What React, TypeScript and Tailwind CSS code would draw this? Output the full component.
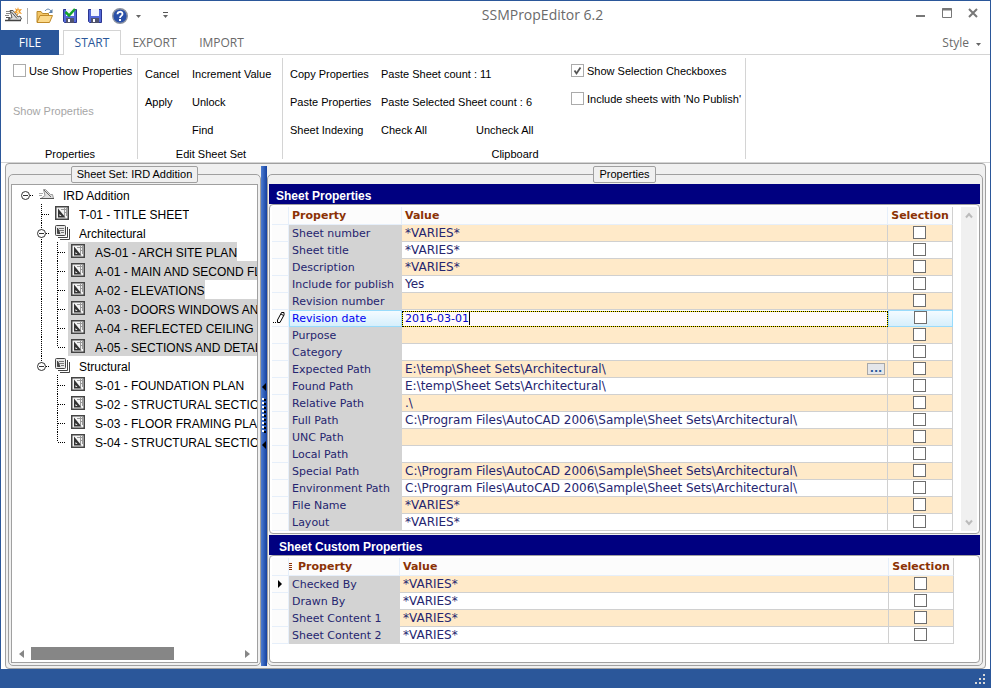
import React, { useState } from "react";

const SANS = "font-['Liberation_Sans',Arial,sans-serif]";
const SEGOE = "font-['Open_Sans','Noto_Sans',sans-serif]";
const VERDANA = "font-['DejaVu_Sans',Verdana,sans-serif]";

function AppIcon() {
  return (
    <svg width="18" height="18" viewBox="0 0 18 18" aria-hidden="true">
      <path d="M1 4.500h4M1 6.500h4M0 8.500h4" stroke="#888" />
      <path d="M5 3.500h3l5 6.500 2-1 1.500 3-2 1.500H6L3 12l4-1.500z" fill="#dcdcdc" stroke="#555" />
      <path d="M1 10.500h4M6 4.500l6 7" stroke="#555" />
      <path d="M0 13.500h16" stroke="#444" strokeWidth="1.500" />
      <path d="M13 0l.8 2.500L17 2l-2 2.500 2 2.500-3-.7L12 9l-.4-3L8.500 5.500l2.500-1.700L10 1l2.200 1.500z" fill="#ee9a2c" />
      <path d="M13.500 3L12 5h2l-1.500 2" fill="none" stroke="#fff3c0" />
    </svg>
  );
}

function FolderIcon() {
  return (
    <svg width="18" height="16" viewBox="0 0 18 16" aria-hidden="true">
      <path d="M1 14V3.500h4l1.500 2h6V8" fill="#f3c565" stroke="#b98a2c" />
      <path d="M1 14.500l3-7h12.500l-3 7z" fill="#fbd98a" stroke="#c08a28" />
      <path d="M9 3c2-2.500 4-2.500 6 0" fill="none" stroke="#5b7fa8" />
      <path d="M16.500 1v4h-4z" fill="#5b7fa8" />
    </svg>
  );
}

function SaveIcon({ checked }: { checked?: boolean }) {
  return (
    <svg width="16" height="16" viewBox="0 0 16 16" aria-hidden="true">
      <path d="M1.500 1.500h13v13h-12l-1-1z" fill="#5468d8" stroke="#2b3690" />
      <rect x="4" y="1" width="8" height="7" fill="#f4f6ff" />
      <rect x="4" y="10" width="8" height="5" fill="#50546e" />
      <rect x="6" y="11" width="2" height="3" fill="#fff" />
      {checked && <path d="M3.500 4l3.500 3.500L13 1" fill="none" stroke="#16a32a" strokeWidth="2.500" />}
    </svg>
  );
}

function HelpIcon() {
  return (
    <svg width="16" height="16" viewBox="0 0 16 16" aria-hidden="true">
      <circle cx="8" cy="8" r="7.300" fill="#2a50a8" stroke="#8d93a0" strokeWidth="1.400" />
      <path d="M5.500 6.200C5.500 3 10.500 3 10.500 6c0 2-2.500 1.800-2.500 4" fill="none" stroke="#fff" strokeWidth="1.800" />
      <rect x="7" y="11" width="2" height="2" fill="#fff" />
    </svg>
  );
}

function DownArrow({ bar }: { bar?: boolean }) {
  return (
    <svg width="7" height="7" viewBox="0 0 7 7" aria-hidden="true">
      {bar && <path d="M1 .5h5" stroke="#555" />}
      <path d="M1 3h5L3.500 6z" fill="#666" />
    </svg>
  );
}

function RibbonButton({ children, disabled }: { children: React.ReactNode; disabled?: boolean }) {
  return (
    <button disabled={disabled} className="block h-7 text-left whitespace-nowrap disabled:text-[#a6a6a6]">
      {children}
    </button>
  );
}

function RibbonCheck({ label, initial = false }: { label: string; initial?: boolean }) {
  const [on, setOn] = useState(initial);
  return (
    <label className="flex h-[25px] items-center gap-[3px] whitespace-nowrap">
      <span className="grid">
        <input
          type="checkbox"
          checked={on}
          onChange={() => setOn(!on)}
          className="col-start-1 row-start-1 size-[13px] appearance-none border border-[#ababab] bg-white"
        />
        {on && (
          <svg width="13" height="13" viewBox="0 0 13 13" className="pointer-events-none col-start-1 row-start-1" aria-hidden="true">
            <path d="M3.500 6.500l2 3 4-6" fill="none" stroke="#555" strokeWidth="1.800" />
          </svg>
        )}
      </span>
      <span className="pt-[2px]">{label}</span>
    </label>
  );
}

function RibbonGroup({ title, className, children }: { title: string; className: string; children: React.ReactNode }) {
  return (
    <section className={`my-[3px] flex shrink-0 flex-col justify-between border-r border-[#d4d4d4] ${className}`}>
      <div className="flex items-start">{children}</div>
      <h2 className="h-3 pl-[2px] text-center leading-[14px]">{title}</h2>
    </section>
  );
}

type Guide = "none" | "pass" | "tee" | "last" | "node" | "nodeLast" | "root";

function GuideCell({ kind }: { kind: Guide }) {
  const up = kind !== "none" && kind !== "root";
  const down = kind === "pass" || kind === "tee" || kind === "node";
  const across = kind !== "none" && kind !== "pass";
  const knob = kind === "root" || kind === "node" || kind === "nodeLast";
  return (
    <svg width="16" height="19" viewBox="0 0 16 19" className="shrink-0" aria-hidden="true">
      <g stroke="#000" strokeDasharray="1 1">
        {up && <path d="M7.500 0V10" />}
        {down && <path d="M7.500 10V19" />}
        {across && <path d="M8 10.500H16" />}
      </g>
      {knob && (
        <g stroke="#333">
          <circle cx="7.500" cy="10.500" r="4" fill="#fff" />
          <path d="M5 10.500h5" />
        </g>
      )}
    </svg>
  );
}

function TreeIcon({ kind }: { kind: "set" | "sheet" | "group" }) {
  if (kind === "set")
    return (
      <svg width="16" height="15" viewBox="0 0 16 15" className="shrink-0" aria-hidden="true">
        <path d="M0 6.500h4M0 8.500h3" stroke="#aaa" />
        <path d="M4.500 2.500h2l5 5h2l1 4H2l4-3z" fill="#e0e0e0" stroke="#999" />
        <path d="M5 3l7 7" stroke="#666" />
        <path d="M1 11.500h14" stroke="#555" />
      </svg>
    );
  if (kind === "group")
    return (
      <svg width="16" height="15" viewBox="0 0 16 15" className="shrink-0" aria-hidden="true">
        <path d="M5 14.500h9.500V4M3 12.500h9.500V2" fill="none" stroke="#444" />
        <rect x=".5" y=".5" width="10" height="10" rx="1" fill="#e8e8e8" stroke="#444" />
        <path d="M2.500 3v5.500H5z" fill="#444" stroke="#444" />
        <path d="M4 3.500h5M4 5.500h5M6 7.500h3" stroke="#777" />
      </svg>
    );
  return (
    <svg width="16" height="15" viewBox="0 0 16 15" className="shrink-0" aria-hidden="true">
      <rect x=".75" y=".75" width="12.500" height="12.500" fill="#f4f4f4" stroke="#444" strokeWidth="1.500" />
      <path d="M3 2.500v9h7.500z" fill="#333" />
      <path d="M4.500 8v2h2z" fill="#f4f4f4" />
      <path d="M6 3.500h6M9 6.500h3M9.500 2v8M11.500 2v8" stroke="#999" />
    </svg>
  );
}

type Node = { text: string; icon: "set" | "sheet" | "group"; guides: Guide[]; selected?: boolean };

const tree: Node[] = [
  { text: "IRD Addition", icon: "set", guides: ["root"] },
  { text: "T-01 - TITLE SHEET", icon: "sheet", guides: ["none", "tee"] },
  { text: "Architectural", icon: "group", guides: ["none", "node"] },
  { text: "AS-01 - ARCH SITE PLAN", icon: "sheet", guides: ["none", "pass", "tee"], selected: true },
  { text: "A-01 - MAIN AND SECOND FL", icon: "sheet", guides: ["none", "pass", "tee"], selected: true },
  { text: "A-02 - ELEVATIONS", icon: "sheet", guides: ["none", "pass", "tee"], selected: true },
  { text: "A-03 - DOORS WINDOWS AND", icon: "sheet", guides: ["none", "pass", "tee"], selected: true },
  { text: "A-04 - REFLECTED CEILING P", icon: "sheet", guides: ["none", "pass", "tee"], selected: true },
  { text: "A-05 - SECTIONS AND DETAI", icon: "sheet", guides: ["none", "pass", "last"], selected: true },
  { text: "Structural", icon: "group", guides: ["none", "nodeLast"] },
  { text: "S-01 - FOUNDATION PLAN", icon: "sheet", guides: ["none", "none", "tee"] },
  { text: "S-02 - STRUCTURAL SECTIO", icon: "sheet", guides: ["none", "none", "tee"] },
  { text: "S-03 - FLOOR FRAMING PLAN", icon: "sheet", guides: ["none", "none", "tee"] },
  { text: "S-04 - STRUCTURAL SECTIO", icon: "sheet", guides: ["none", "none", "last"] },
];

const ARCH = "C:\\Program Files\\AutoCAD 2006\\Sample\\Sheet Sets\\Architectural\\";

type Row = { name: string; value: string; browse?: boolean; editing?: boolean; current?: boolean };

const sheetRows: Row[] = [
  { name: "Sheet number", value: "*VARIES*" },
  { name: "Sheet title", value: "*VARIES*" },
  { name: "Description", value: "*VARIES*" },
  { name: "Include for publish", value: "Yes" },
  { name: "Revision number", value: "" },
  { name: "Revision date", value: "2016-03-01", editing: true },
  { name: "Purpose", value: "" },
  { name: "Category", value: "" },
  { name: "Expected Path", value: "E:\\temp\\Sheet Sets\\Architectural\\", browse: true },
  { name: "Found Path", value: "E:\\temp\\Sheet Sets\\Architectural\\" },
  { name: "Relative Path", value: ".\\" },
  { name: "Full Path", value: ARCH },
  { name: "UNC Path", value: "" },
  { name: "Local Path", value: "" },
  { name: "Special Path", value: ARCH },
  { name: "Environment Path", value: ARCH },
  { name: "File Name", value: "*VARIES*" },
  { name: "Layout", value: "*VARIES*" },
];

const customRows: Row[] = [
  { name: "Checked By", value: "*VARIES*", current: true },
  { name: "Drawn By", value: "*VARIES*" },
  { name: "Sheet Content 1", value: "*VARIES*" },
  { name: "Sheet Content 2", value: "*VARIES*" },
];

function GridRow({ row, id, odd }: { row: Row; id: string; odd: boolean }) {
  const [value, setValue] = useState(row.value);
  const fill = odd ? "bg-white" : "bg-[#ffeac9]";
  const active = "border border-[#99dbfb] bg-linear-to-b from-[#f4fbff] to-[#d6effc]";
  return (
    <tr className="h-[17px]">
      <td className="border-r border-b border-[#e6effa] bg-[#fcfcfc] p-0">
        {row.editing && (
          <svg width="14" height="14" viewBox="0 0 14 14" className="ml-px block" aria-hidden="true">
            <path d="M4.500 11.500V9l4-7.500h2.500V4l-4 7.500zM8 3l2.500 1.500" fill="#fff" stroke="#000" />
            <path d="M0 11.500h1M2 11.500h1" stroke="#000" />
          </svg>
        )}
        {row.current && (
          <svg width="5" height="8" viewBox="0 0 5 8" className="ml-[6px] block" aria-hidden="true">
            <path d="M0 0l4 4-4 4z" fill="#000" />
          </svg>
        )}
      </td>
      <th
        scope="row"
        id={id}
        className={`truncate p-0 text-left font-normal ${row.editing ? `${active} pl-[2px] leading-[15px] text-[#0000f0]` : "bg-[#d3d3d3] pl-[3px]"}`}
      >
        {row.name}
      </th>
      {row.editing ? (
        <td className="p-0">
          <div className="flex h-4 items-center border border-dotted border-black bg-[#ffee00]">
            <div className="flex h-full w-full items-center bg-[#fffafa] pl-[2px]">
              <input
                aria-labelledby={id}
                value={value}
                onChange={(e) => setValue(e.target.value)}
                className="field-sizing-content h-full text-[#0000c8] outline-none"
              />
              <span className="h-[13px] w-px bg-black" />
            </div>
          </div>
        </td>
      ) : (
        <td className={`border-r border-b border-[#d0d0d0] p-0 pl-[3px] ${fill}`}>
          <div className="flex h-4 items-center justify-between text-[12px] whitespace-nowrap">
            <span>{value}</span>
            {row.browse && (
              <button className="mr-[2px] h-3 w-[18px] border border-[#a8a8a8] bg-[#e4e6ea] text-[11px] leading-[6px] font-bold text-[#2a5a9a]">
                ...
              </button>
            )}
          </div>
        </td>
      )}
      <td className={`p-0 pr-px align-top ${row.editing ? active : `border-r border-b border-[#d0d0d0] pt-px ${fill}`}`}>
        <input
          type="checkbox"
          aria-labelledby={id}
          className="mx-auto block size-[13px] appearance-none border border-[#6e6e6e] bg-white checked:bg-[#2b579a]"
        />
      </td>
    </tr>
  );
}

function PropertyGrid({ rows, prefix, handle, nameCol }: { rows: Row[]; prefix: string; handle?: boolean; nameCol: string }) {
  const head = "border-r border-b border-[#e6effa] bg-[#fcfcfc] p-0 pl-[3px] text-left font-bold";
  return (
    <table className={`w-full table-fixed border-separate border-spacing-0 text-[11px] leading-4 text-[#25256f] ${VERDANA}`}>
      <colgroup>
        <col className="w-[17px]" />
        <col className={nameCol} />
        <col />
        <col className="w-[65px]" />
      </colgroup>
      <thead>
        <tr className="h-[18px] text-[#8b3205]">
          <td className={head} />
          <th scope="col" className={head}>
            <span className="flex items-center">
              {handle && (
                <svg width="6" height="8" viewBox="0 0 6 8" className="-ml-[3px]" aria-hidden="true">
                  <path d="M0 .5h3M0 2.500h3M0 4.500h3M0 6.500h3" stroke="#8b3205" />
                </svg>
              )}
              <span className={handle ? "pl-[3px]" : ""}>Property</span>
            </span>
          </th>
          <th scope="col" className={head}>Value</th>
          <th scope="col" className="border-r border-b border-r-[#d0d0d0] border-b-[#e6effa] bg-[#fcfcfc] p-0 text-center font-bold">
            Selection
          </th>
        </tr>
      </thead>
      <tbody>
        {rows.map((r, i) => (
          <GridRow key={r.name} row={r} id={`${prefix}-${i}`} odd={i % 2 === 1} />
        ))}
      </tbody>
    </table>
  );
}

const tabs = ["EXPORT", "IMPORT"];

export default function App() {
  return (
    <div className={`flex min-h-screen flex-col border-x border-t border-[#2b579a] bg-white text-[11px] text-black ${SANS}`}>
      <header className={`flex h-[29px] items-center text-[#6a6a6a] ${SEGOE}`}>
        <div className="flex items-center pl-1">
          <AppIcon />
          <span className="ml-1 h-4 w-px bg-[#aaa]" />
          <button aria-label="Open" className="ml-2"><FolderIcon /></button>
          <button aria-label="Save checked" className="ml-2"><SaveIcon checked /></button>
          <button aria-label="Save" className="ml-[9px]"><SaveIcon /></button>
          <button aria-label="Help" className="ml-[9px]"><HelpIcon /></button>
          <button aria-label="Help options" className="ml-[7px]"><DownArrow /></button>
          <button aria-label="Customize toolbar" className="ml-5"><DownArrow bar /></button>
        </div>
        <h1 className="flex-1 pb-[2px] text-center text-[14px]">SSMPropEditor 6.2</h1>
        <div className="flex items-start gap-4 self-start pt-[7px] pr-3">
          <button aria-label="Minimize">
            <svg width="10" height="10" viewBox="0 0 10 10"><path d="M0 8h9" stroke="#777" strokeWidth="2" /></svg>
          </button>
          <button aria-label="Maximize">
            <svg width="10" height="10" viewBox="0 0 10 10"><path d="M.5.5h9v9h-9z" fill="none" stroke="#777" /><path d="M0 1.500h10" stroke="#777" strokeWidth="2" /></svg>
          </button>
          <button aria-label="Close">
            <svg width="10" height="10" viewBox="0 0 10 10"><path d="M1 1l8 8M9 1L1 9" stroke="#777" strokeWidth="2" /></svg>
          </button>
        </div>
      </header>

      <nav className={`flex h-[25px] text-[12px] text-[#6a6a6a] ${SEGOE}`}>
        <button className="w-[58px] bg-[#2b579a] text-white">FILE</button>
        <span className="w-1 border-b border-[#d4d4d4]" />
        <button className="w-[58px] border-x border-t border-[#d4d4d4] text-[#2b579a]">START</button>
        {tabs.map((t) => (
          <button key={t} className="w-[67px] border-b border-[#d4d4d4] pt-[2px]">{t}</button>
        ))}
        <span className="flex-1 border-b border-[#d4d4d4]" />
        <button className="flex items-center gap-[6px] border-b border-[#d4d4d4] pt-[2px] pr-2">
          Style <DownArrow />
        </button>
      </nav>

      <div className="flex h-[108px] border-b border-[#d4d4d4]">
        <RibbonGroup title="Properties" className="w-[137px]">
          <div className="flex flex-col gap-[14px] pl-3">
            <RibbonCheck label="Use Show Properties" />
            <RibbonButton disabled>Show Properties</RibbonButton>
          </div>
        </RibbonGroup>
        <RibbonGroup title="Edit Sheet Set" className="w-[145px]">
          <div className="w-[47px] shrink-0 pt-[2px] pl-[7px]">
            <RibbonButton>Cancel</RibbonButton>
            <RibbonButton>Apply</RibbonButton>
          </div>
          <div className="pt-[2px] pl-[7px]">
            <RibbonButton>Increment Value</RibbonButton>
            <RibbonButton>Unlock</RibbonButton>
            <RibbonButton>Find</RibbonButton>
          </div>
        </RibbonGroup>
        <RibbonGroup title="Clipboard" className="w-[463px]">
          <div className="w-[98px] shrink-0 pt-[2px] pl-[7px]">
            <RibbonButton>Copy Properties</RibbonButton>
            <RibbonButton>Paste Properties</RibbonButton>
            <RibbonButton>Sheet Indexing</RibbonButton>
          </div>
          <div className="w-[190px] shrink-0 pt-[2px]">
            <RibbonButton>Paste Sheet count : 11</RibbonButton>
            <RibbonButton>Paste Selected Sheet count : 6</RibbonButton>
            <div className="grid grid-cols-2">
              <RibbonButton>Check All</RibbonButton>
              <RibbonButton>Uncheck All</RibbonButton>
            </div>
          </div>
          <div className="flex flex-col gap-[3px]">
            <RibbonCheck label="Show Selection Checkboxes" initial />
            <RibbonCheck label="Include sheets with 'No Publish'" />
          </div>
        </RibbonGroup>
      </div>

      <main className="mx-1 flex flex-1 rounded-[4px] border border-[#a0a0a0] bg-[#f0f0f0] p-[2px]">
        <fieldset className="flex w-[253px] min-w-0 shrink-0 flex-col rounded-[5px] border border-[#a0a0a0] p-[2px] pt-px">
          <legend className="mx-auto h-[17px] rounded-[2px] border border-[#a0a0a0] bg-[#f0f0f0] px-[5px] leading-[15px]">
            Sheet Set: IRD Addition
          </legend>
          <div className="flex flex-1 flex-col justify-between border border-[#a0a0a0] bg-white">
            <ul className="overflow-hidden pl-[6px] text-[12px] leading-[15px]">
              {tree.map((n) => (
                <li key={n.text} className="flex h-[19px] whitespace-nowrap">
                  {n.guides.map((g, i) => (
                    <GuideCell key={i} kind={g} />
                  ))}
                  <span className={`ml-[2px] flex min-w-0 items-center gap-2 pl-[3px] ${n.selected ? "bg-[#d3d3d3]" : ""}`}>
                    <TreeIcon kind={n.icon} />
                    <span className="min-w-0 overflow-hidden pt-1">{n.text}</span>
                  </span>
                </li>
              ))}
            </ul>
            <div className="flex h-[17px] items-center px-[7px]">
              <svg width="5" height="8" viewBox="0 0 5 8" aria-hidden="true"><path d="M5 0v8L0 4z" fill="#868686" /></svg>
              <div className="mx-[7px] flex-1">
                <div className="h-[13px] w-[69%] bg-[#868686]" />
              </div>
              <svg width="5" height="8" viewBox="0 0 5 8" aria-hidden="true"><path d="M0 0v8l5-4z" fill="#868686" /></svg>
            </div>
          </div>
        </fieldset>

        <div className="flex w-[6px] shrink-0 flex-col items-center justify-center gap-[7px] bg-linear-to-r from-[#4d7cd0] to-[#1440a0]">
          <svg width="4" height="8" viewBox="0 0 4 8" aria-hidden="true"><path d="M4 0v8L0 4z" fill="#000" /></svg>
          <svg width="4" height="36" viewBox="0 0 4 36" aria-hidden="true">
            <path d="M1 0v36" stroke="#fff" strokeWidth="2" strokeDasharray="2 2" />
            <path d="M3 1v35" stroke="#000" strokeWidth="2" strokeDasharray="2 2" />
          </svg>
          <svg width="4" height="8" viewBox="0 0 4 8" aria-hidden="true"><path d="M4 0v8L0 4z" fill="#000" /></svg>
        </div>

        <fieldset className="flex min-w-0 flex-1 flex-col rounded-[5px] border border-[#a0a0a0] p-[2px] pt-px pl-px">
          <legend className="mx-auto h-[17px] rounded-[2px] border border-[#a0a0a0] bg-[#f0f0f0] px-[5px] leading-[15px]">Properties</legend>
          <h2 className="h-5 bg-[#000080] pt-[2px] pl-[7px] text-[12px] leading-5 font-bold text-white">Sheet Properties</h2>
          <div className="flex rounded-[4px] border border-[#a0a0a0] bg-white p-[2px]">
            <div className="min-w-0 flex-1 pr-2">
              <PropertyGrid rows={sheetRows} prefix="sheet" nameCol="w-[113px]" />
            </div>
            <div className="flex w-4 flex-col items-center justify-between bg-[#f0f0f0] py-[5px]">
              <svg width="8" height="7" viewBox="0 0 8 7" aria-hidden="true"><path d="M1 5.500l3-3.500 3 3.500" fill="none" stroke="#bbb" strokeWidth="2" /></svg>
              <svg width="8" height="7" viewBox="0 0 8 7" aria-hidden="true"><path d="M1 1.500L4 5l3-3.500" fill="none" stroke="#bbb" strokeWidth="2" /></svg>
            </div>
          </div>
          <h2 className="mt-px h-5 bg-[#000080] pt-[5px] pl-[10px] text-[12px] leading-[15px] font-bold text-white">Sheet Custom Properties</h2>
          <div className="flex-1 rounded-[4px] border border-[#a0a0a0] bg-white p-[2px] pr-[25px]">
            <PropertyGrid rows={customRows} prefix="custom" handle nameCol="w-[111px]" />
          </div>
        </fieldset>
      </main>

      <footer className="flex h-[19px] items-center justify-end bg-[#2b579a] pr-1">
        <svg width="12" height="12" viewBox="0 0 12 12" fill="#d8d8d8" aria-hidden="true">
          <path d="M9 1h2v2H9zM9 5h2v2H9zM5 5h2v2H5zM9 9h2v2H9zM5 9h2v2H5zM1 9h2v2H1z" />
        </svg>
      </footer>
    </div>
  );
}
